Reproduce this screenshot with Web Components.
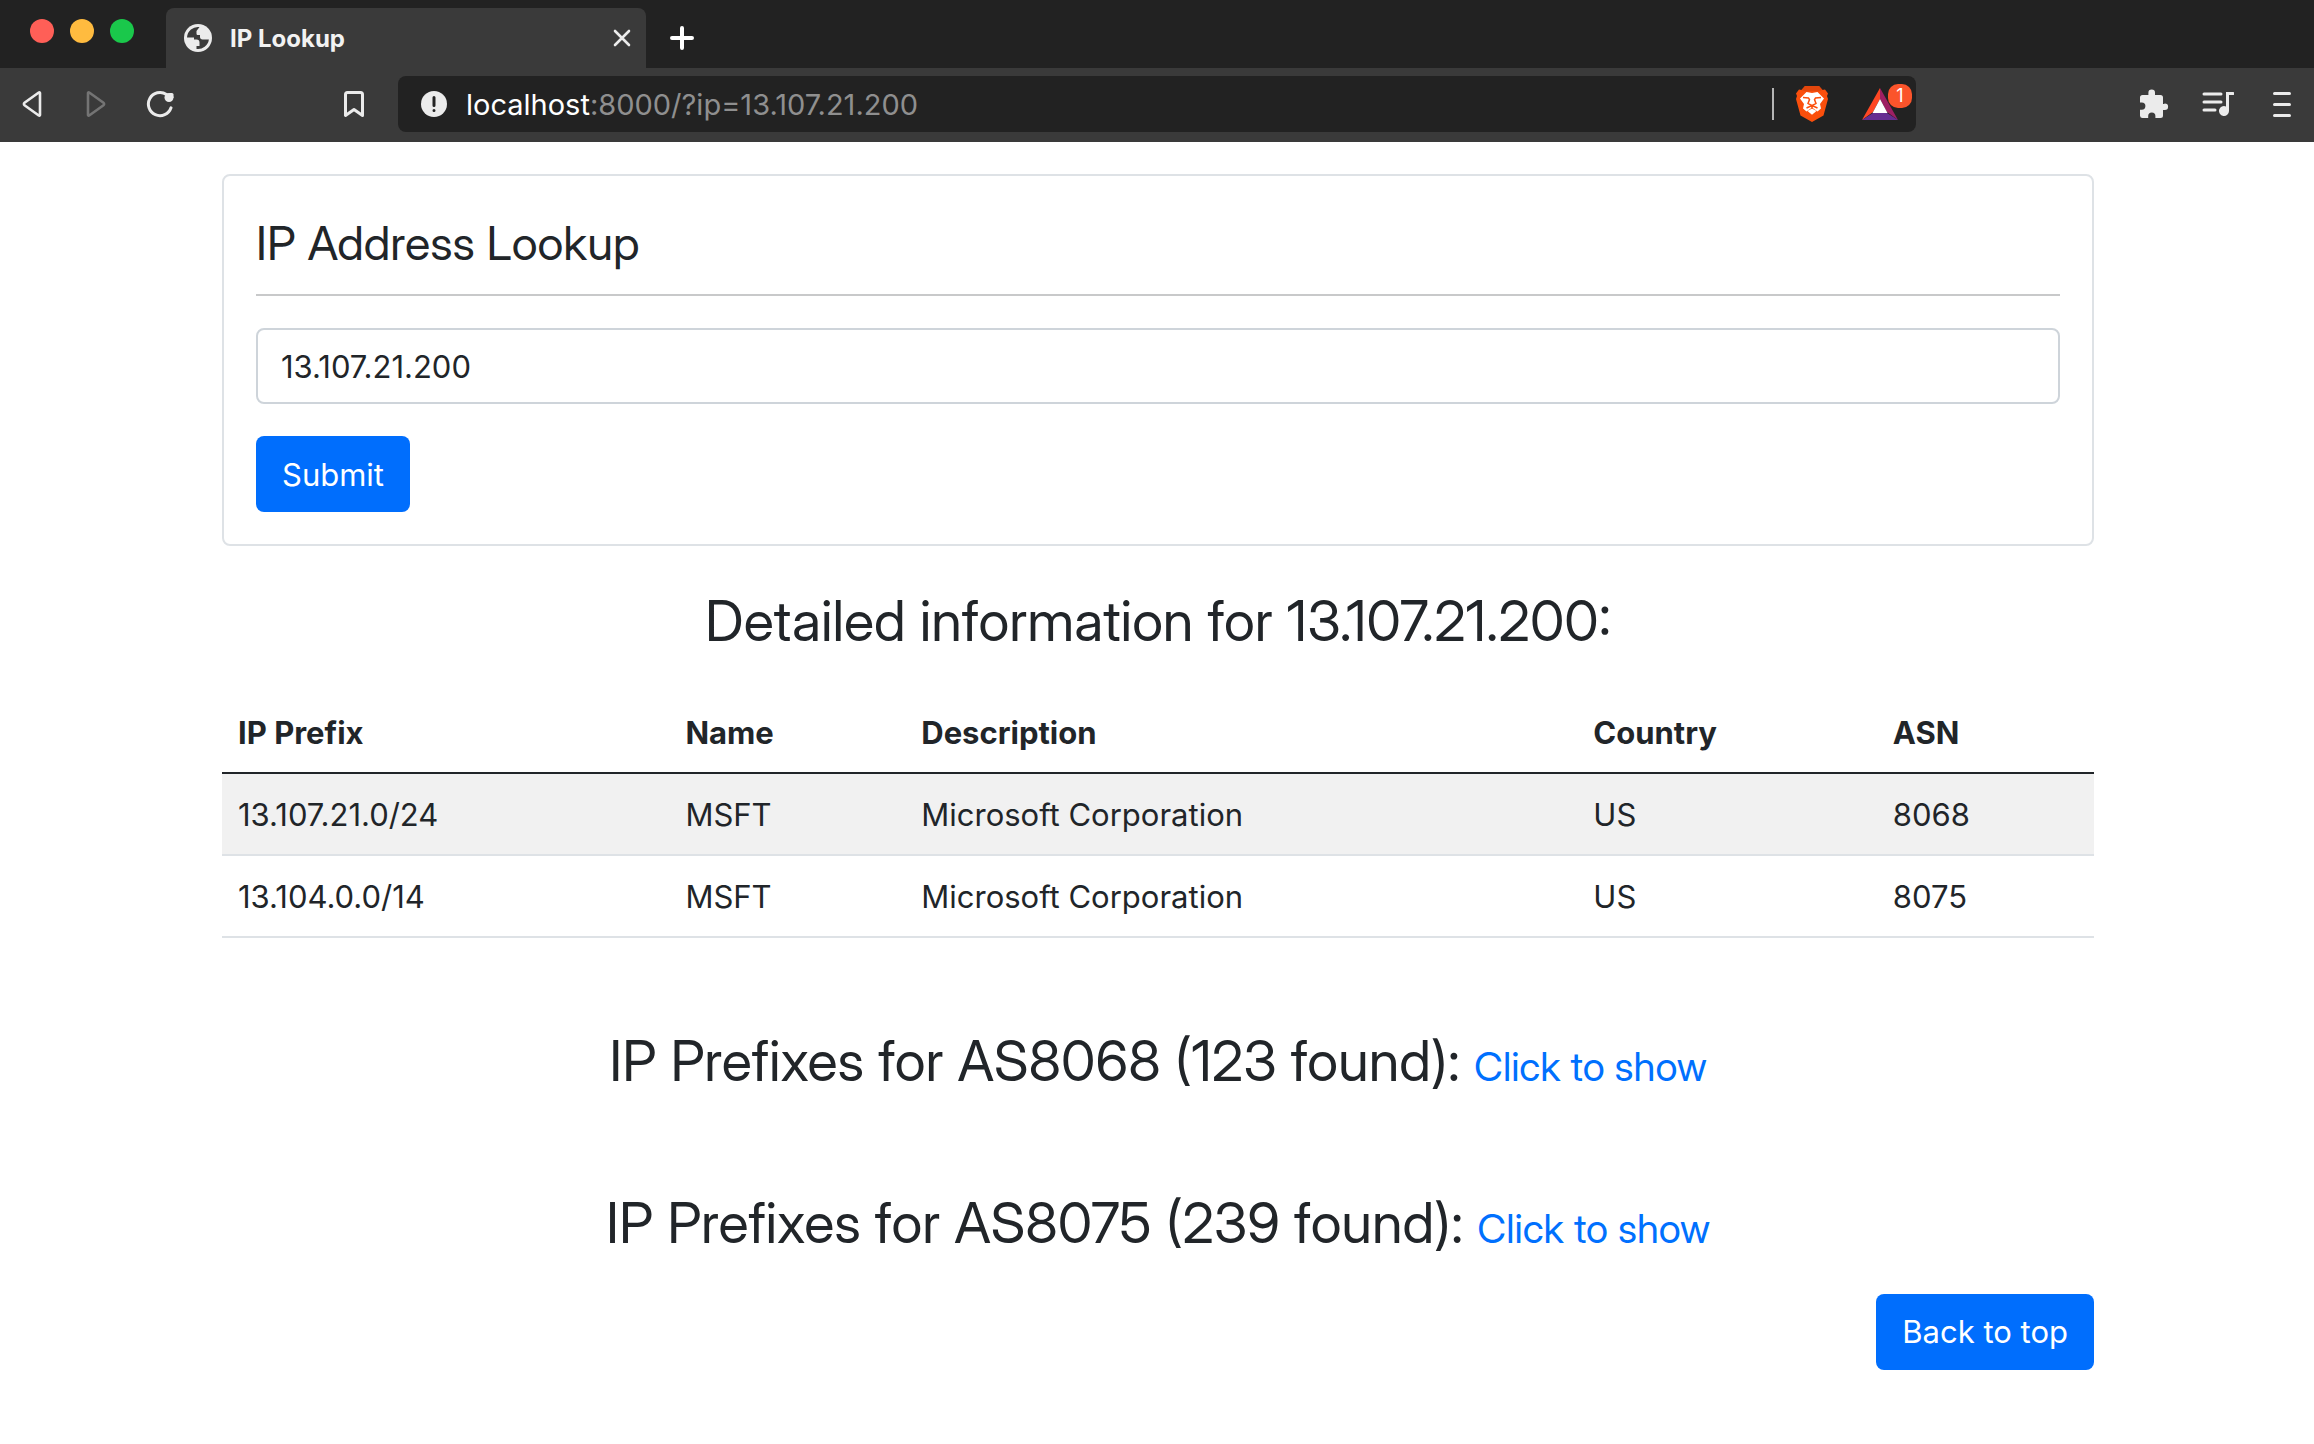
<!DOCTYPE html>
<html lang="en"><head><meta charset="utf-8"><title>IP Lookup</title>
<style>
html,body{margin:0;min-height:100%}
body{font-family:Inter,"Liberation Sans",sans-serif;color:#212529;background:#fff;--heading-font:"Inter Display",Inter,"Liberation Sans",sans-serif}
</style></head>
<body>
<browser-window>
  <browser-tab slot="tab">IP Lookup</browser-tab>
  <address-bar slot="address" host="localhost" rest=":8000/?ip=13.107.21.200"></address-bar>
  <lookup-page></lookup-page>
</browser-window>
<script>
const ICONS = {
  globe: [28, 28, '<circle cx="14" cy="14" r="14" fill="#ebebeb"/><path fill="#3a3a3a" d="M3 13.500A11 11 0 0 1 15.500 3.100L12.500 7v2.500c0 1 .5 1.500 1.500 1.500h2v2c0 1.500 1 2.500 2.500 2.500h6.400A11 11 0 0 1 12.500 24.900V22h3v-3.500c0-2-1-3-3-3H10v-2z"/>'],
  close: [18, 18, '<path stroke="#ebebeb" stroke-width="2.600" stroke-linecap="round" d="M2 2l14 14M16 2L2 16"/>'],
  plus: [24, 24, '<path stroke="#fff" stroke-width="4" stroke-linecap="round" d="M12 2v20M2 12h20"/>'],
  back: [28, 28, '<path fill="none" stroke="#ebebeb" stroke-width="2.600" stroke-linejoin="round" d="M22 3v22a.8.8 0 0 1-1.200.5L6.500 15.200a1.500 1.500 0 0 1 0-2.400L20.800 2.500A.8.8 0 0 1 22 3z"/>'],
  forward: [28, 28, '<path fill="none" stroke="#747474" stroke-width="2.600" stroke-linejoin="round" d="M6 3v22a.8.8 0 0 0 1.200.5l14.300-10.300a1.500 1.500 0 0 0 0-2.400L7.200 2.500A.8.8 0 0 0 6 3z"/>'],
  reload: [28, 28, '<path fill="none" stroke="#ebebeb" stroke-width="3" stroke-linecap="round" d="M25 17.800A11.600 11.600 0 1 1 20.500 4.500"/><circle cx="23" cy="7.500" r="4.500" fill="#ebebeb"/><path fill="#ebebeb" d="M23.500 3H26a1.500 1.500 0 0 1 1.500 1.500V8h-4z"/>'],
  bookmark: [28, 28, '<path fill="none" stroke="#ebebeb" stroke-width="3" stroke-linejoin="round" d="M5.500 25.500V4.500a2 2 0 0 1 2-2h13a2 2 0 0 1 2 2v21L14 19.500z"/>'],
  info: [28, 28, '<circle cx="14" cy="14" r="13" fill="#ebebeb"/><path stroke="#222" stroke-width="3" stroke-linecap="round" d="M14 7.500v8M14 20.500v.1"/>'],
  lion: [32, 36, '<path fill="#fb4f0c" d="M9 0h14l3.500 4L29 3.500l3 4L31 10l1 3-4.500 16.500L16 36 4.500 29.500 0 13l1-3-1-2.500 3-4 2.500.5z"/><path fill="#e2460c" d="M9 0h14l3.500 4L22 5.500 16 5l-6 .5L5.500 4z"/><path fill="#fff" d="M10.500 6l5.500 1 5.500-1L28 12.500l-4 5.500 1 4.500-3.500 3-5.500-4-5.500 4-3.500-3L8 18l-4-5.500zM16 22.500l4.500 2.500L16 28.800 11.500 25z"/><path fill="none" stroke="#fb4f0c" stroke-width="1.500" d="M7 11.500l5.500.5 1 1.500-1.500 4 4 2.200 4-2.200-1.500-4 1-1.500 5.500-.5M16 19.500v3M10.500 22l5.500-2.500 5.500 2.500"/>'],
  bat: [36, 32, '<path fill="#ff4724" d="M18 0v11L11 24 0 32z"/><path fill="#9e1f63" d="M18 0l18 32-11-8-7-13z"/><path fill="#662d91" d="M0 32l11-7h14l11 7z"/><path fill="#fff" d="M18 11l7.500 14h-15z"/>'],
  puzzle: [30, 30, '<path fill="#ebebeb" d="M25 15h-1V8.500A2.500 2.500 0 0 0 21.500 6H16V3.800a3.300 3.300 0 0 0-6.600 0V6H3.500A2.500 2.500 0 0 0 1 8.500v5h1.800a3.600 3.600 0 0 1 0 7.200H1v6A2.500 2.500 0 0 0 3.500 29h5.700v-2a3.600 3.600 0 0 1 7.200 0v2h5.100a2.500 2.500 0 0 0 2.500-2.500V21h1.800a3.300 3.300 0 0 0 0-6.600z"/>'],
  music: [32, 26, '<path fill="none" stroke="#ebebeb" stroke-width="3" stroke-linecap="round" d="M2 3h17M2 11h17M2 19h11"/><path fill="#ebebeb" d="M24 1h7a1.500 1.500 0 0 1 0 3h-4v16a5 5 0 1 1-3-4.600z"/>'],
  menu: [20, 28, '<path stroke="#ebebeb" stroke-width="3" stroke-linecap="round" d="M2.500 3.500h15M2.500 14.500h15M2.500 25.500h15"/>']
};
const define = (tag, markup, setup) => customElements.define(tag, class extends HTMLElement {
  constructor() { super(); this.attachShadow({mode: 'open'}).innerHTML = markup; }
  connectedCallback() { if (setup) setup(this, this.shadowRoot); }
});

define('ui-icon', `<style>:host{display:block;flex:none}svg{display:block}</style>`, (el, root) => {
  const [w, h, body] = ICONS[el.getAttribute('name')];
  root.innerHTML += `<svg width="${w}" height="${h}" viewBox="0 0 ${w} ${h}" aria-hidden="true">${body}</svg>`;
});

define('icon-button', `<style>
:host{display:block;flex:none}
button{display:flex;align-items:center;justify-content:center;width:40px;height:40px;padding:0;border:0;background:none}
</style><button type="button"><slot></slot></button>`, (el, root) => {
  root.querySelector('button').setAttribute('aria-label', el.getAttribute('label'));
});

define('browser-tab', `<style>
:host{display:flex;align-items:center;box-sizing:border-box;width:480px;height:60px;padding:0 4px 0 18px;background:#3a3a3a;border-radius:8px 8px 0 0;color:#f2f2f2;font-size:24px;font-weight:700}
span{flex:1;margin-left:18px}
</style><ui-icon name="globe"></ui-icon><span><slot></slot></span><icon-button label="Close tab"><ui-icon name="close"></ui-icon></icon-button>`);

define('address-bar', `<style>
:host{display:flex;align-items:center;box-sizing:border-box;height:56px;padding:0 18px 0 22px;border-radius:8px;background:#222;color:#8f8f8f;font-size:29px}
.url{flex:1;margin-left:18px}
b{font-weight:400;color:#fff}
i{width:2px;height:32px;background:#b5b5b5;margin-right:22px}
.ads{position:relative;margin-left:34px}
.badge{position:absolute;left:26px;top:-4px;width:24px;height:24px;line-height:24px;border-radius:10px;background:#fb542b;color:#fff;font-size:18px;text-align:center}
</style><ui-icon name="info"></ui-icon><span class="url" role="textbox" aria-label="Address"><b></b><span></span></span><i></i>
<ui-icon name="lion"></ui-icon><div class="ads"><ui-icon name="bat"></ui-icon><span class="badge">1</span></div>`, (el, root) => {
  root.querySelector('b').textContent = el.getAttribute('host');
  root.querySelector('.url span').textContent = el.getAttribute('rest');
});

define('browser-window', `<style>
:host{display:block}
.strip{display:flex;align-items:flex-end;height:68px;padding-left:30px;background:#222}
.lights{display:flex;gap:16px;align-self:center;width:136px;padding-bottom:6px}
.lights span{width:24px;height:24px;border-radius:50%}
.new{margin:0 0 10px 16px}
.bar{display:flex;align-items:center;gap:24px;height:74px;padding:0 12px 2px;background:#3a3a3a;box-sizing:border-box}
.mark{margin-left:130px}
slot[name=address]{display:block;flex:1;margin-right:194px}
</style>
<header>
<div class="strip"><div class="lights"><span style="background:#ff5f57"></span><span style="background:#ffbb3f"></span><span style="background:#1ac84b"></span></div>
<slot name="tab"></slot><icon-button class="new" label="New tab"><ui-icon name="plus"></ui-icon></icon-button></div>
<nav class="bar">
<icon-button label="Back"><ui-icon name="back"></ui-icon></icon-button>
<icon-button label="Forward"><ui-icon name="forward"></ui-icon></icon-button>
<icon-button label="Reload"><ui-icon name="reload"></ui-icon></icon-button>
<icon-button class="mark" label="Bookmark"><ui-icon name="bookmark"></ui-icon></icon-button>
<slot name="address"></slot>
<icon-button label="Extensions"><ui-icon name="puzzle"></ui-icon></icon-button>
<icon-button label="Media"><ui-icon name="music"></ui-icon></icon-button>
<icon-button label="Menu"><ui-icon name="menu"></ui-icon></icon-button>
</nav></header>
<main><slot></slot></main>`);

define('lookup-form', `<style>
:host{display:block;border:2px solid #dee2e6;border-radius:8px;padding:32px}
label{display:block;font-family:var(--heading-font);font-size:47px;line-height:70px}
hr{margin:16px 0 32px;border:0;height:2px;background:#c8c9ca}
input{display:block;box-sizing:border-box;width:100%;height:76px;padding:0 23px;border:2px solid #ced4da;border-radius:8px;font:inherit;font-size:31px;color:inherit;background:#fff}
button{display:block;margin-top:32px;height:76px;padding:0 26px;border:0;border-radius:8px;background:#006efd;color:#fff;font:inherit;font-size:31px}
</style><form><label for="ip">IP Address Lookup</label><hr><input id="ip" type="text" value="13.107.21.200"><button type="button">Submit</button></form>`);

define('prefix-table', `<style>
:host{display:block}
table{width:100%;table-layout:fixed;border-collapse:separate;border-spacing:0;font-size:31px;line-height:48px}
th,td{padding:17px 16px 15px;text-align:left;border-bottom:2px solid #dee2e6}
th{font-weight:700;border-color:#212529}
tbody tr:nth-child(odd){background:#f1f1f1}
</style><table><colgroup><col style="width:23.900%"><col style="width:12.600%"><col style="width:35.900%"><col style="width:16%"><col></colgroup>
<thead><tr><th>IP Prefix</th><th>Name</th><th>Description</th><th>Country</th><th>ASN</th></tr></thead>
<tbody><tr><td>13.107.21.0/24</td><td>MSFT</td><td>Microsoft Corporation</td><td>US</td><td>8068</td></tr>
<tr><td>13.104.0.0/14</td><td>MSFT</td><td>Microsoft Corporation</td><td>US</td><td>8075</td></tr></tbody></table>`);

define('prefix-heading', `<style>
:host{display:block;text-align:center}
h2{margin:0;font-family:var(--heading-font);font-size:56px;font-weight:400;line-height:70px}
a{font-size:40px;line-height:1;color:#0070fe;text-decoration:none}
</style><h2><slot></slot> <a href="#show">Click to show</a></h2>`);

define('lookup-page', `<style>
:host{display:block;box-sizing:border-box;max-width:1920px;margin:0 auto;padding:32px 23px 32px 25px}
h2{margin:40px 0 36px;font-family:var(--heading-font);font-size:56px;font-weight:400;line-height:70px;text-align:center}
section{display:flex;flex-direction:column;gap:92px;margin:88px 0 36px}
footer{display:flex;justify-content:flex-end}
.top{height:76px;line-height:76px;padding:0 26px;border-radius:8px;background:#006efd;color:#fff;font-size:31px;text-decoration:none}
</style>
<lookup-form></lookup-form>
<h2>Detailed information for 13.107.21.200:</h2>
<prefix-table></prefix-table>
<section><prefix-heading>IP Prefixes for AS8068 (123 found):</prefix-heading><prefix-heading>IP Prefixes for AS8075 (239 found):</prefix-heading></section>
<footer><a class="top" href="#top">Back to top</a></footer>`);
</script>
</body></html>
